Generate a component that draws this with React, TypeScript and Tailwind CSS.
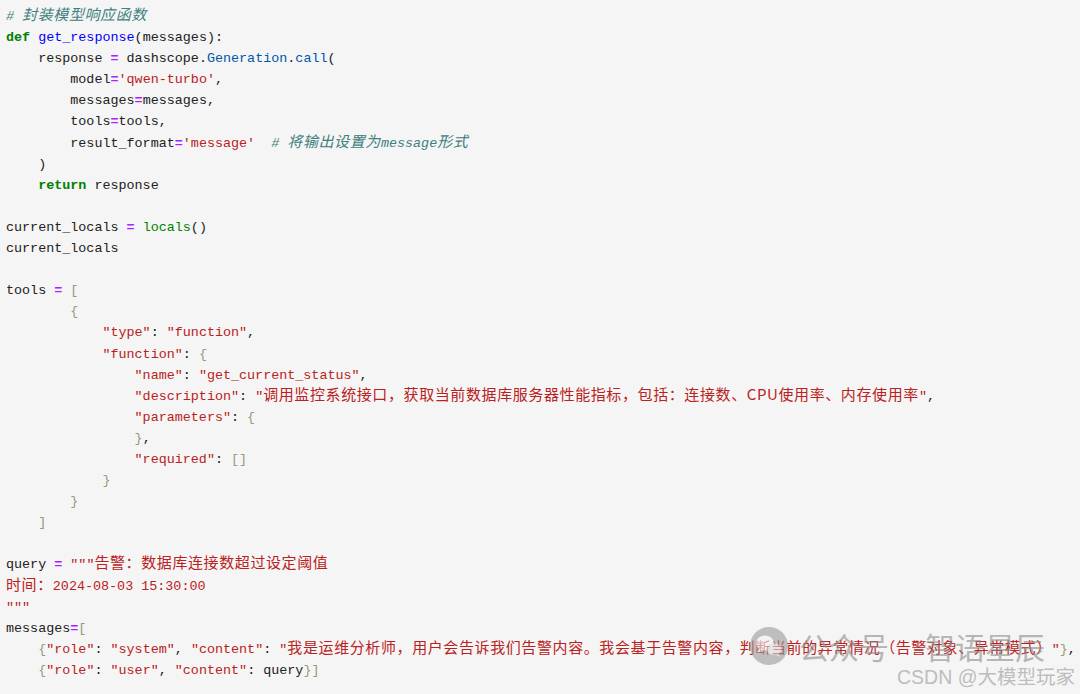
import React from "react";

type Tok = [string, string];

const c = {
  v: "text-[#212121]",
  kw: "text-[#008000] font-bold",
  fn: "text-[#0000ff]",
  str: "text-[#ba2121]",
  op: "text-[#aa22ff] font-bold",
  cm: "text-[#408080] italic",
  pr: "text-[#0055aa]",
  br: "text-[#999977]",
  bi: "text-[#008000]",
};

const sp = (n: number): Tok => ["v", " ".repeat(n)];

const lines: Tok[][] = [
  [["cm", "# 封装模型响应函数"]],
  [["kw", "def"], ["v", " "], ["fn", "get_response"], ["v", "(messages):"]],
  [sp(4), ["v", "response "], ["op", "="], ["v", " dashscope."], ["pr", "Generation"], ["v", "."], ["pr", "call"], ["v", "("]],
  [sp(8), ["v", "model"], ["op", "="], ["str", "'qwen-turbo'"], ["v", ","]],
  [sp(8), ["v", "messages"], ["op", "="], ["v", "messages,"]],
  [sp(8), ["v", "tools"], ["op", "="], ["v", "tools,"]],
  [sp(8), ["v", "result_format"], ["op", "="], ["str", "'message'"], ["v", "  "], ["cm", "# 将输出设置为message形式"]],
  [sp(4), ["v", ")"]],
  [sp(4), ["kw", "return"], ["v", " response"]],
  [],
  [["v", "current_locals "], ["op", "="], ["v", " "], ["bi", "locals"], ["v", "()"]],
  [["v", "current_locals"]],
  [],
  [["v", "tools "], ["op", "="], ["v", " "], ["br", "["]],
  [sp(8), ["br", "{"]],
  [sp(12), ["str", '"type"'], ["v", ": "], ["str", '"function"'], ["v", ","]],
  [sp(12), ["str", '"function"'], ["v", ": "], ["br", "{"]],
  [sp(16), ["str", '"name"'], ["v", ": "], ["str", '"get_current_status"'], ["v", ","]],
  [sp(16), ["str", '"description"'], ["v", ": "], ["str", '"调用监控系统接口，获取当前数据库服务器性能指标，包括：连接数、CPU使用率、内存使用率"'], ["v", ","]],
  [sp(16), ["str", '"parameters"'], ["v", ": "], ["br", "{"]],
  [sp(16), ["br", "}"], ["v", ","]],
  [sp(16), ["str", '"required"'], ["v", ": "], ["br", "[]"]],
  [sp(12), ["br", "}"]],
  [sp(8), ["br", "}"]],
  [sp(4), ["br", "]"]],
  [],
  [["v", "query "], ["op", "="], ["v", " "], ["str", '"""告警：数据库连接数超过设定阈值']],
  [["str", "时间：2024-08-03 15:30:00"]],
  [["str", '"""']],
  [["v", "messages"], ["op", "="], ["br", "["]],
  [sp(4), ["br", "{"], ["str", '"role"'], ["v", ": "], ["str", '"system"'], ["v", ", "], ["str", '"content"'], ["v", ": "], ["str", '"我是运维分析师，用户会告诉我们告警内容。我会基于告警内容，判断当前的异常情况（告警对象、异常模式）"'], ["br", "}"], ["v", ","]],
  [sp(4), ["br", "{"], ["str", '"role"'], ["v", ": "], ["str", '"user"'], ["v", ", "], ["str", '"content"'], ["v", ": query"], ["br", "}]"]],
];

// split latin / CJK so the CJK runs get a wider, non-mono font
function Seg({ text }: { text: string }) {
  const parts = text.split(/([\u3000-\u303f\u4e00-\u9fff\uff00-\uffefCPU]+(?=[\u4e00-\u9fff])|[\u3000-\u303f\u4e00-\u9fff\uff00-\uffef]+)/);
  return (
    <>
      {parts.map((p, i) =>
        /[\u3000-\u303f\u4e00-\u9fff\uff00-\uffef]/.test(p) ? (
          <span key={i} className="text-[15px] leading-none font-['Noto_Sans_CJK_SC',sans-serif] tracking-[0.6px]">
            {p}
          </span>
        ) : (
          <span key={i}>{p}</span>
        )
      )}
    </>
  );
}

export default function App() {
  return (
    <div className="relative w-[1080px] h-[694px] overflow-hidden bg-[#f5f5f5]">
      <div className="pt-[6px] pl-[6px] font-['Liberation_Mono',monospace] text-[13.4px] leading-[21.1px]">
        {lines.map((ln, i) => (
          <div key={i} className="h-[21.1px] whitespace-pre">
            {ln.map(([k, t], j) => (
              <span key={j} className={c[k as keyof typeof c]}>
                <Seg text={t} />
              </span>
            ))}
          </div>
        ))}
      </div>

      {/* watermark */}
      <div className="absolute left-[749px] top-[626px] flex items-center gap-[10px] opacity-60">
        <svg width="40" height="40" viewBox="0 0 40 40">
          <circle cx="20" cy="20" r="19" fill="#9a9a9a" />
          <ellipse cx="16" cy="17" rx="9" ry="7.5" fill="#f2f2f2" />
          <path d="M10 22 L8.5 27 L14 23.5 Z" fill="#f2f2f2" />
          <ellipse cx="25" cy="23" rx="7.5" ry="6" fill="#dcdcdc" />
          <path d="M29 27 L31 31 L26.5 28.5 Z" fill="#dcdcdc" />
        </svg>
        <span className="font-['Noto_Sans_CJK_SC',sans-serif] text-[30px] leading-none text-[#8c8c8c]">公众号</span>
        <span className="ml-[26px] font-['Noto_Sans_CJK_SC',sans-serif] text-[30px] leading-none text-[#8c8c8c]">智语星辰</span>
      </div>
      <div className="absolute right-[5px] top-[665px] font-['Liberation_Sans','Noto_Sans_CJK_SC',sans-serif] text-[19.5px] leading-[24px] text-[#bdbdbd]">
        CSDN @大模型玩家
      </div>
    </div>
  );
}
